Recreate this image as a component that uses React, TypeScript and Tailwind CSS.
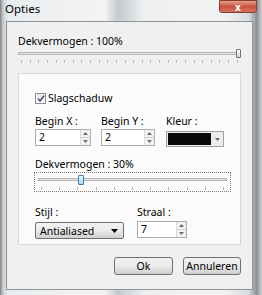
import React from "react";

const font = { fontFamily: '"Segoe UI", "Noto Sans", "Open Sans", sans-serif' };

function Ticks({ count, className }: { count: number; className?: string }) {
  return (
    <div className={"flex justify-between " + (className ?? "")}>
      {Array.from({ length: count }).map((_, i) => (
        <div key={i} className="w-px h-[3px] bg-[#b8b8b8]" />
      ))}
    </div>
  );
}

function Spin({ value, width }: { value: string; width: string }) {
  return (
    <div className={"flex h-[17px] border border-[#abadb3] bg-white " + width}>
      <div className="flex-1 pl-[3px] text-[10.5px] leading-[15px] text-black">{value}</div>
      <div className="flex w-[10px] flex-col border-l border-[#d8d8d8] bg-[#f2f2f2]">
        <div className="flex flex-1 items-center justify-center border-b border-[#d0d0d0]">
          <svg width="5" height="3" viewBox="0 0 5 3"><path d="M0 3 L2.5 0 L5 3Z" fill="#6d6d6d" /></svg>
        </div>
        <div className="flex flex-1 items-center justify-center">
          <svg width="5" height="3" viewBox="0 0 5 3"><path d="M0 0 L2.5 3 L5 0Z" fill="#6d6d6d" /></svg>
        </div>
      </div>
    </div>
  );
}

export default function App() {
  return (
    <div
      className="relative h-[295px] w-[262px] overflow-hidden"
      style={{
        ...font,
        background:
          "linear-gradient(90deg, #7d8286 0px, #c9cdd0 3px, #e9ecee 8px, #f3f4f5 40%, #c5c9cc 45%, #eef0f1 55%, #f1f2f3 85%, #d9dcde 95%, #8a8f93 98%, #cfd2d4 100%)",
      }}
    >
      <div className="flex h-[21px] items-start pl-[5px] pt-[1px]">
        <span className="text-[11.5px] leading-[15px] text-black">Opties</span>
      </div>
      <div className="absolute right-[5px] top-0 flex h-[13px] w-[38px] items-center justify-center rounded-b-[3px] border border-[#8a3a2c] bg-gradient-to-b from-[#e4a08f] via-[#c8523d] to-[#d47260]">
        <span className="text-[10px] font-bold leading-none text-white">x</span>
      </div>

      <div className="ml-[6px] flex h-[269px] w-[247px] flex-col border border-[#8e9398] bg-[#f0f0f0] px-[11px]">
        <div className="mt-[12px] text-[10.5px] leading-[14px] text-black">Dekvermogen : 100%</div>
        <div className="relative mt-[1px] h-[8px]">
          <div className="absolute left-0 right-0 top-[3px] h-[3px] border border-[#b5b5b5] bg-[#e6e6e6]" />
          <div className="absolute right-0 top-0 h-[9px] w-[5px] rounded-[1px] border border-[#707070] bg-gradient-to-b from-[#fdfdfd] to-[#d9d9d9]" />
        </div>
        <Ticks count={26} className="mt-[3px] px-[3px]" />

        <div className="mt-[10px] flex h-[172px] flex-col border border-[#d5d9dc] bg-[#fbfbfb] pl-[16px] pr-[9px]">
          <div className="mt-[17px] flex items-center gap-[2px]">
            <div className="flex h-[11px] w-[11px] items-center justify-center border border-[#8f8f8f] bg-gradient-to-b from-[#e8e8e8] to-[#fafafa]">
              <svg width="8" height="7" viewBox="0 0 8 7"><path d="M1 3.5 L3 6 L7 0.8" stroke="#3d4f6b" strokeWidth="1.5" fill="none" /></svg>
            </div>
            <span className="text-[10.5px] leading-[14px] text-black">Slagschaduw</span>
          </div>

          <div className="mt-[9px] flex">
            <div className="flex w-[66px] flex-col">
              <span className="text-[10.5px] leading-[14px] text-black">Begin X :</span>
              <div className="mt-[1px]"><Spin value="2" width="w-[56px]" /></div>
            </div>
            <div className="flex w-[65px] flex-col">
              <span className="text-[10.5px] leading-[14px] text-black">Begin Y :</span>
              <div className="mt-[1px]"><Spin value="2" width="w-[54px]" /></div>
            </div>
            <div className="flex flex-col">
              <span className="text-[10.5px] leading-[14px] text-black">Kleur :</span>
              <div className="mt-[3px] flex h-[16px] w-[58px] border border-[#a0a0a0] bg-[#ececec]">
                <div className="m-[1px] flex-1 bg-[#0a0a0a]" />
                <div className="flex w-[11px] items-center justify-center">
                  <svg width="5" height="3" viewBox="0 0 5 3"><path d="M0 0 L2.5 3 L5 0Z" fill="#6d6d6d" /></svg>
                </div>
              </div>
            </div>
          </div>

          <div className="mt-[10px] text-[10.5px] leading-[14px] text-black">Dekvermogen : 30%</div>
          <div className="-ml-[1px] mt-[1px] h-[20px] w-[197px] border border-dotted border-[#7a7a7a] px-[3px] pt-[2px]">
            <div className="relative h-[10px]">
              <div className="absolute left-0 right-0 top-[3px] h-[3px] border border-[#b5b5b5] bg-[#e6e6e6]" />
              <div className="absolute left-[40px] top-0 h-[10px] w-[6px] rounded-[1px] border border-[#3c7fb1] bg-gradient-to-b from-[#eaf6fd] to-[#a7d9f5]" />
            </div>
            <Ticks count={11} className="mt-[2px] px-[3px]" />
          </div>

          <div className="mt-[13px] flex">
            <div className="flex w-[102px] flex-col">
              <span className="text-[10.5px] leading-[14px] text-black">Stijl :</span>
              <div className="mt-[3px] flex h-[17px] w-[89px] items-center justify-between rounded-[2px] border border-[#707070] bg-gradient-to-b from-[#f2f2f2] via-[#ebebeb] to-[#cfcfcf] pl-[4px] pr-[5px]">
                <span className="text-[10.5px] leading-[14px] text-black">Antialiased</span>
                <svg width="7" height="4" viewBox="0 0 7 4"><path d="M0 0 L3.5 4 L7 0Z" fill="#000" /></svg>
              </div>
            </div>
            <div className="flex flex-col">
              <span className="text-[10.5px] leading-[14px] text-black">Straal :</span>
              <div className="mt-[2px]"><Spin value="7" width="w-[50px]" /></div>
            </div>
          </div>
        </div>

        <div className="mt-[12px] flex justify-end gap-[10px] pr-[0px]">
          <div className="flex h-[18px] w-[59px] items-center justify-center rounded-[3px] border border-[#707070] bg-gradient-to-b from-[#f2f2f2] via-[#ebebeb] to-[#cfcfcf]">
            <span className="text-[10.5px] leading-[14px] text-black">Ok</span>
          </div>
          <div className="flex h-[18px] w-[58px] items-center justify-center rounded-[3px] border border-[#707070] bg-gradient-to-b from-[#f2f2f2] via-[#ebebeb] to-[#cfcfcf]">
            <span className="text-[10.5px] leading-[14px] text-black">Annuleren</span>
          </div>
        </div>
      </div>
    </div>
  );
}
